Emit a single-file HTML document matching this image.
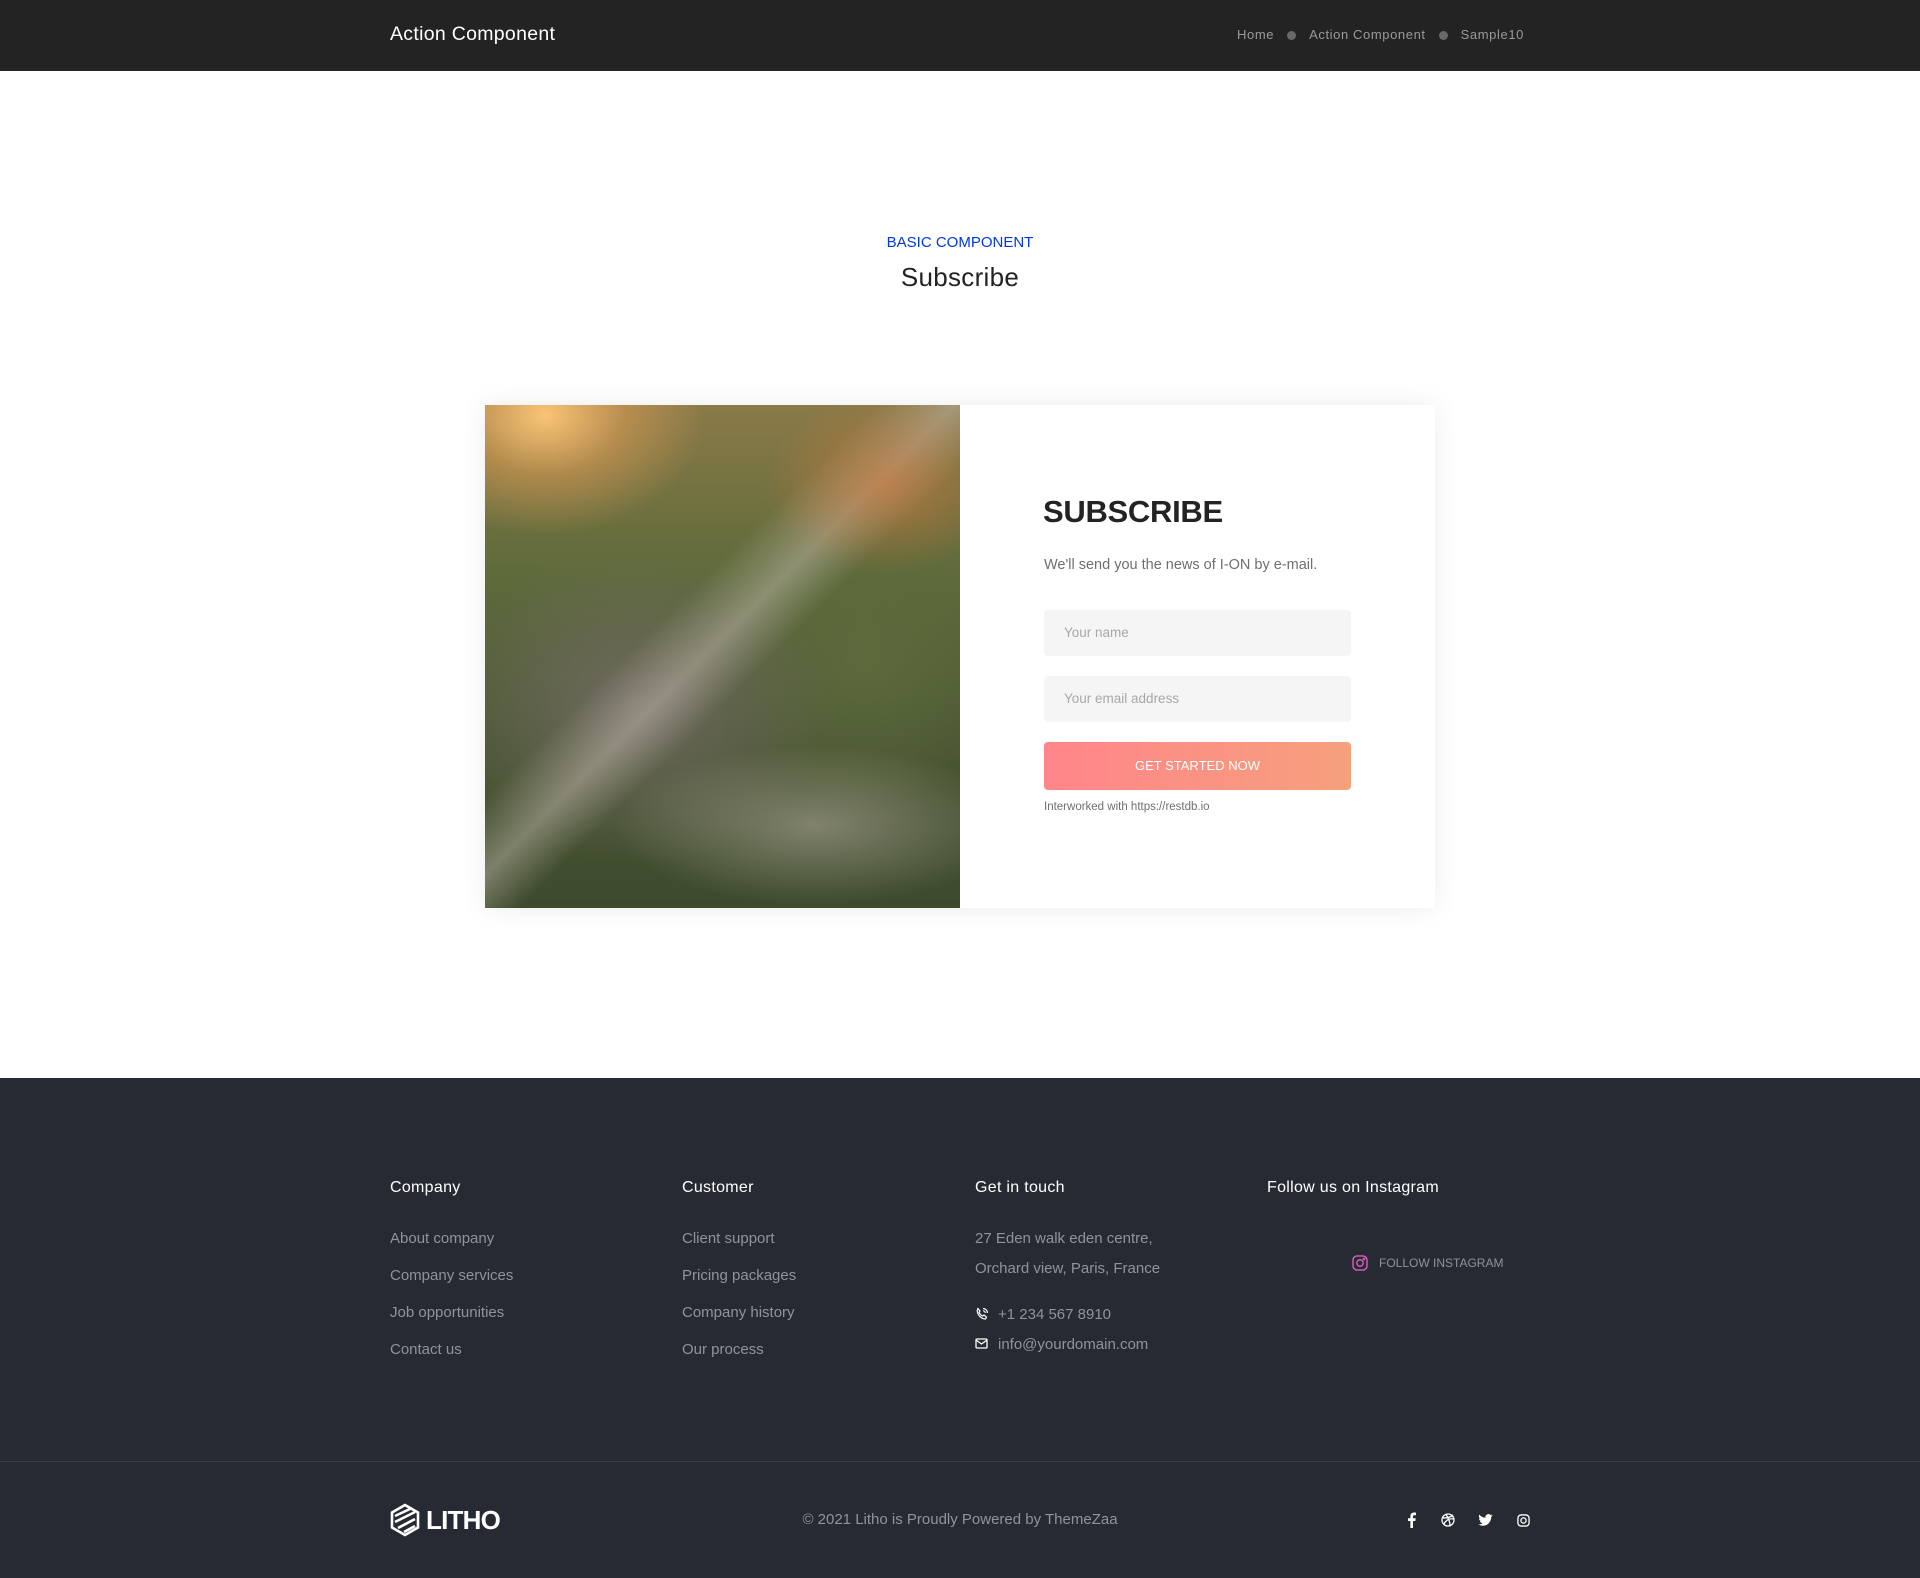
<!DOCTYPE html>
<html><head><meta charset="utf-8"><style>
*{margin:0;padding:0;box-sizing:border-box}
body{width:1920px;height:1578px;position:relative;background:#fff;font-family:"Liberation Sans",sans-serif;overflow:hidden}
.a{position:absolute;white-space:nowrap}
.hdr{position:absolute;left:0;top:0;width:1920px;height:71px;background:#232323}
.ft{position:absolute;left:0;top:1078px;width:1920px;height:500px;background:#262a33}
.h4{color:#fff;font-size:16px;top:1179px;letter-spacing:.3px}
.lk{color:#8f939c;font-size:15px}
.inp{position:absolute;left:1044px;width:307px;height:46px;background:#f5f5f5;border-radius:4px;color:#a8a8a8;font-size:13.5px;padding:0 20px;line-height:46px}
</style></head><body>
<div class="hdr"></div>
<div class="a" style="left:390px;top:23px;color:#fff;font-size:19.5px;letter-spacing:.3px">Action Component</div>
<div class="a" style="left:1237px;top:27px;color:#9a9a9a;font-size:13px;letter-spacing:.6px">Home<span style="display:inline-block;width:9px;height:9px;border-radius:50%;background:#6a6a6a;margin:0 13px;vertical-align:middle"></span>Action Component<span style="display:inline-block;width:9px;height:9px;border-radius:50%;background:#6a6a6a;margin:0 13px;vertical-align:middle"></span>Sample10</div>

<div class="a" style="left:0;width:1920px;text-align:center;top:234px;color:#0038e3;font-size:15px">BASIC COMPONENT</div>
<div class="a" style="left:0;width:1920px;text-align:center;top:262px;color:#232323;font-size:26px;letter-spacing:.3px">Subscribe</div>

<div style="position:absolute;left:485px;top:405px;width:950px;height:503px;background:#fff;box-shadow:0 0 25px rgba(0,0,0,.08)"></div>
<div style="position:absolute;left:485px;top:405px;width:475px;height:503px;background:
radial-gradient(ellipse 160px 120px at 60px 10px,rgba(255,200,120,.95),rgba(255,170,90,.4) 50%,transparent),
radial-gradient(ellipse 120px 90px at 400px 80px,rgba(210,120,60,.6),transparent),
radial-gradient(ellipse 200px 80px at 330px 420px,rgba(190,180,170,.5),transparent),
linear-gradient(135deg,transparent 40%,rgba(200,190,180,.45) 48%,transparent 55%),
radial-gradient(ellipse 200px 160px at 150px 300px,#6f6a60,transparent),
radial-gradient(ellipse 150px 150px at 380px 250px,#5c6a3c,transparent),
linear-gradient(180deg,#8a7a48 0%,#5d6a3a 35%,#4b5733 65%,#3d4a2c 100%)"></div>

<div class="a" style="left:1043px;top:494px;color:#232323;font-size:31px;font-weight:bold;letter-spacing:-.3px">SUBSCRIBE</div>
<div class="a" style="left:1044px;top:557px;color:#6f6f6f;font-size:14.5px">We'll send you the news of I-ON by e-mail.</div>
<div class="inp" style="top:610px">Your name</div>
<div class="inp" style="top:676px">Your email address</div>
<div class="a" style="left:1044px;top:742px;width:307px;height:48px;border-radius:4px;background:linear-gradient(90deg,#ff858a,#f6a07c);color:#fff;font-size:13px;text-align:center;line-height:48px">GET STARTED NOW</div>
<div class="a" style="left:1044px;top:801px;color:#6f6f6f;font-size:11.5px">Interworked with https://restdb.io</div>

<div class="ft"></div>
<div class="a h4" style="left:390px">Company</div>
<div class="a h4" style="left:682px">Customer</div>
<div class="a h4" style="left:975px">Get in touch</div>
<div class="a h4" style="left:1267px">Follow us on Instagram</div>
<div class="a lk" style="left:390px;top:1220px;line-height:37px">About company<br>Company services<br>Job opportunities<br>Contact us</div>
<div class="a lk" style="left:682px;top:1220px;line-height:37px">Client support<br>Pricing packages<br>Company history<br>Our process</div>
<div class="a lk" style="left:975px;top:1224px;line-height:30px">27 Eden walk eden centre,<br>Orchard view, Paris, France</div>
<svg class="a" style="left:975px;top:1307px" width="14" height="14" viewBox="0 0 14 14" fill="none" stroke="#fff" stroke-width="1.2"><path d="M3 1.5l2 2.5-1 1.3c.8 1.8 2 3 3.7 3.8L9 8l2.5 2-1 2c-4.5-.3-8-3.8-8.3-8.5z"/><path d="M8 1.5a4.5 4.5 0 014.5 4.5M8 3.8A2.2 2.2 0 0110.2 6"/></svg>
<div class="a lk" style="left:998px;top:1306px">+1 234 567 8910</div>
<svg class="a" style="left:975px;top:1338px" width="13" height="11" viewBox="0 0 13 11" fill="none" stroke="#fff" stroke-width="1.3"><rect x="1" y="1" width="11" height="9" rx="1"/><path d="M1 2l5.5 4L12 2"/></svg>
<div class="a lk" style="left:998px;top:1336px">info@yourdomain.com</div>
<svg class="a" style="left:1352px;top:1255px" width="16" height="16" viewBox="0 0 16 16" fill="none" stroke="#d45bb5" stroke-width="1.5"><rect x="1" y="1" width="14" height="14" rx="4"/><circle cx="8" cy="8" r="3.2"/><circle cx="12" cy="4" r=".6" fill="#d45bb5"/></svg>
<div class="a" style="left:1379px;top:1256px;color:#8f939c;font-size:12px">FOLLOW INSTAGRAM</div>

<div style="position:absolute;left:0;top:1461px;width:1920px;height:1px;background:#3a3e47"></div>
<svg class="a" style="left:390px;top:1503px" width="30" height="34" viewBox="0 0 30 34" fill="none" stroke="#fff" stroke-width="2.6"><path d="M15 2L28 9.5v15L15 32 2 24.5v-15z"/><path d="M5 13l17-8M5 19l20-10M8 25l17-9M14 29l11-6"/></svg>
<div class="a" style="left:426px;top:1505px;color:#fff;font-size:26px;font-weight:bold;letter-spacing:-.8px">LITHO</div>
<div class="a" style="left:0;width:1920px;text-align:center;top:1511px;color:#8f939c;font-size:15px">© 2021 Litho is Proudly Powered by ThemeZaa</div>
<svg class="a" style="left:1407px;top:1512px" width="9" height="16" viewBox="0 0 9 16" fill="#fff"><path d="M6 16V9h2.3l.4-2.8H6V4.5c0-.8.3-1.3 1.4-1.3H9V.7C8.6.6 7.8.5 7 .5 5 .5 3.4 1.7 3.4 4v2.2H1V9h2.4v7z"/></svg>
<svg class="a" style="left:1441px;top:1513px" width="14" height="14" viewBox="0 0 14 14" fill="none" stroke="#fff" stroke-width="1.3"><circle cx="7" cy="7" r="6"/><path d="M2 5c4 0 8-1 10-3M3 11c2-4 5-6 10-5M5 1.5c2 3 4 7 4 11"/></svg>
<svg class="a" style="left:1478px;top:1514px" width="15" height="12" viewBox="0 0 24 20" fill="#fff"><path d="M24 2.4c-.9.4-1.8.7-2.8.8 1-.6 1.8-1.6 2.2-2.7-1 .6-2 1-3.1 1.2A4.9 4.9 0 0012 6.2 14 14 0 011.7 1a4.9 4.9 0 001.5 6.6c-.8 0-1.600-.3-2.2-.6 0 2.4 1.7 4.4 3.9 4.8-.7.2-1.5.2-2.2.1.6 2 2.4 3.4 4.6 3.4A9.9 9.9 0 010 17.3 14 14 0 007.5 19.5c9.1 0 14-7.5 14-14v-.6c1-.7 1.8-1.6 2.5-2.500z"/></svg>
<svg class="a" style="left:1517px;top:1514px" width="13" height="13" viewBox="0 0 14 14" fill="none" stroke="#fff" stroke-width="1.4"><rect x="1" y="1" width="12" height="12" rx="3.5"/><circle cx="7" cy="7" r="2.8"/></svg>
</body></html>
